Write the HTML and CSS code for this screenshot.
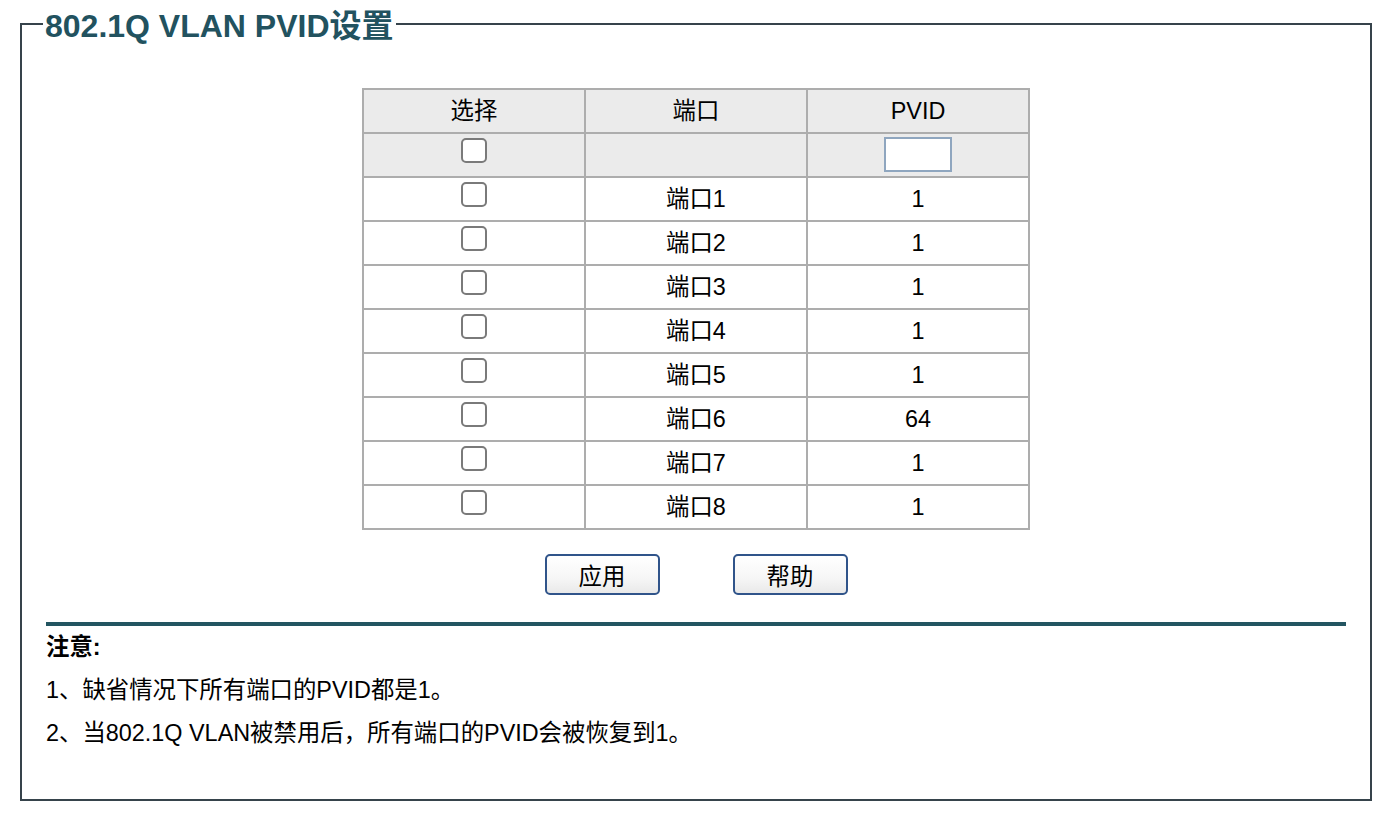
FILE: index.html
```html
<!DOCTYPE html>
<html lang="zh-CN">
<head>
<meta charset="utf-8">
<title>802.1Q VLAN PVID设置</title>
<link rel="stylesheet" href="styles.css">
</head>
<body>
<fieldset class="panel">
  <legend class="panel-title">802.1Q VLAN PVID设置</legend>
  <table class="pvid-table">
    <thead>
      <tr class="head-row">
        <th>选择</th>
        <th>端口</th>
        <th>PVID</th>
      </tr>
    </thead>
    <tbody>
      <tr class="filter-row">
        <td class="cb-cell"><input type="checkbox" class="cb"></td>
        <td></td>
        <td class="input-cell"><input type="text" class="pvid-input"></td>
      </tr>
      <tr><td class="cb-cell"><input type="checkbox" class="cb"></td><td>端口1</td><td>1</td></tr>
      <tr><td class="cb-cell"><input type="checkbox" class="cb"></td><td>端口2</td><td>1</td></tr>
      <tr><td class="cb-cell"><input type="checkbox" class="cb"></td><td>端口3</td><td>1</td></tr>
      <tr><td class="cb-cell"><input type="checkbox" class="cb"></td><td>端口4</td><td>1</td></tr>
      <tr><td class="cb-cell"><input type="checkbox" class="cb"></td><td>端口5</td><td>1</td></tr>
      <tr><td class="cb-cell"><input type="checkbox" class="cb"></td><td>端口6</td><td>64</td></tr>
      <tr><td class="cb-cell"><input type="checkbox" class="cb"></td><td>端口7</td><td>1</td></tr>
      <tr><td class="cb-cell"><input type="checkbox" class="cb"></td><td>端口8</td><td>1</td></tr>
    </tbody>
  </table>
  <div class="actions">
    <button type="button" class="btn">应用</button>
    <button type="button" class="btn">帮助</button>
  </div>
  <div class="divider"></div>
  <div class="notes">
    <div class="notes-title">注意:</div>
    <div>1、缺省情况下所有端口的PVID都是1。</div>
    <div>2、当802.1Q VLAN被禁用后，所有端口的PVID会被恢复到1。</div>
  </div>
</fieldset>
</body>
</html>
```

FILE: styles.css
```css
html, body {
  margin: 0;
  padding: 0;
  background: #ffffff;
}

body {
  font-family: "Liberation Sans", "Noto Sans CJK SC", sans-serif;
  font-size: 23.4px;
  color: #000000;
}

.panel {
  margin: 6px 24px 0 20px;
  border: 2px solid #36434b;
  padding: 46px 24px 44px;
  min-width: 0;
}

.panel-title {
  font-size: 32px;
  font-weight: bold;
  line-height: 32px;
  color: #22525f;
  padding: 4px 2px 0;
  margin-left: -3px;
}

.pvid-table {
  margin: 0 auto;
  border-collapse: separate;
  border-spacing: 0;
  border-top: 2px solid #adadad;
  border-left: 2px solid #adadad;
}

.pvid-table th,
.pvid-table td {
  width: 220px;
  height: 42px;
  padding: 0;
  border-right: 2px solid #adadad;
  border-bottom: 2px solid #adadad;
  text-align: center;
  vertical-align: middle;
  font-weight: normal;
  line-height: 26px;
}

.head-row th,
.filter-row td {
  background: #ebebeb;
}

.pvid-table td.cb-cell,
.pvid-table td.input-cell {
  vertical-align: top;
}

.cb {
  appearance: none;
  -webkit-appearance: none;
  display: block;
  box-sizing: border-box;
  width: 26px;
  height: 25px;
  margin: 4px auto 0;
  border: 2px solid #7a7a7a;
  border-radius: 5px;
  background: #ffffff;
}

.pvid-input {
  display: block;
  box-sizing: border-box;
  width: 68px;
  height: 35px;
  margin: 3px auto 0;
  border: 2px solid #8fa6bf;
  background: #ffffff;
  padding: 0;
}

.actions {
  display: flex;
  justify-content: center;
  gap: 73px;
  margin-top: 24px;
}

.btn {
  box-sizing: border-box;
  width: 115px;
  height: 41px;
  padding: 6px 0 0;
  border: 2px solid #30548a;
  border-radius: 5px;
  background: linear-gradient(#ffffff, #f6f6f6 60%, #e9e9e9);
  font-family: "Liberation Sans", "Noto Sans CJK SC", sans-serif;
  font-size: 23.4px;
  line-height: 31px;
  color: #000000;
}

.divider {
  height: 4px;
  background: #235561;
  margin-top: 27px;
}

.notes {
  line-height: 43px;
}

.notes-title {
  font-weight: bold;
}
```
